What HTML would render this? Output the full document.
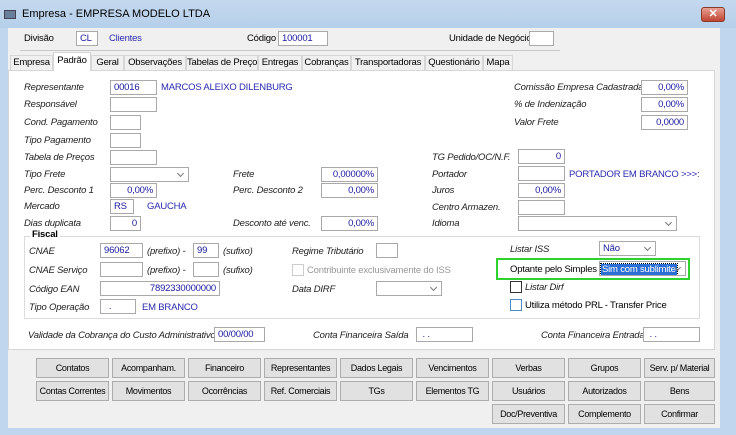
<!DOCTYPE html>
<html><head><meta charset="utf-8"><style>
*{box-sizing:border-box;margin:0;padding:0}
body{width:736px;height:435px;overflow:hidden;font-family:"Liberation Sans",sans-serif;font-size:9.5px;letter-spacing:-0.2px;color:#000;background:#bfd6ee;position:relative}
.a{position:absolute;white-space:nowrap}
.i{font-style:italic;color:#222}
.in{position:absolute;background:#fff;border:1px solid #a9a9a9;height:15px;font-size:9.5px;color:#1a1aa0;padding:0 3px;line-height:13px;white-space:nowrap;overflow:hidden}
.r{text-align:right}
.b{color:#2a2ab0}
.sel::after{content:"";position:absolute;right:5px;top:3px;width:4px;height:4px;border-right:1px solid #777;border-bottom:1px solid #777;transform:rotate(45deg)}
.tab{position:absolute;top:55px;height:15px;border:1px solid #d6d6d6;border-bottom:none;background:#f0f0f0;line-height:14px;text-align:center;font-size:9.5px;white-space:nowrap;overflow:hidden}
.btn{position:absolute;width:73px;height:20px;background:#e1e1e1;border:1px solid #adadad;text-align:center;line-height:18px;font-size:9px;white-space:nowrap;overflow:hidden;letter-spacing:-0.3px}
.cb{position:absolute;width:12px;height:12px;background:#fff;border:1px solid #333}
</style></head><body>
<div class="a" style="left:0;top:0;width:736px;height:28px;background:linear-gradient(#c4d9ef,#b6cfea)"></div>
<div class="a" style="left:4px;top:10px;width:12px;height:9px;background:#6a7f99;border:1px solid #445"></div>
<div class="a" style="left:22px;top:8px;font-size:11px;letter-spacing:0">Empresa - EMPRESA MODELO LTDA</div>
<div class="a" style="left:701px;top:7px;width:24px;height:15px;background:linear-gradient(#e8a195,#c0442f);border:1px solid #8a3a2c;border-radius:3px;color:#fff;font-weight:bold;text-align:center;line-height:13px;font-size:11px">✕</div>
<div class="a" style="left:8px;top:28px;width:712px;height:400px;background:#f0f0f0"></div>
<div class="a" style="left:24px;top:33px">Divisão</div>
<div class="in" style="left:76px;top:31px;width:22px">CL</div>
<div class="a b" style="left:109px;top:33px">Clientes</div>
<div class="a" style="left:247px;top:33px">Código</div>
<div class="in" style="left:278px;top:31px;width:50px">100001</div>
<div class="a" style="left:449px;top:33px">Unidade de Negócio</div>
<div class="in" style="left:529px;top:31px;width:25px"></div>
<div class="a" style="left:20px;top:50px;width:540px;height:1px;background:#c8c8c8"></div>
<div class="tab" style="left:10px;width:43px">Empresa</div>
<div class="tab" style="left:53px;top:52px;height:19px;width:38px;background:#fff;z-index:2;line-height:16px">Padrão</div>
<div class="tab" style="left:91px;width:33px">Geral</div>
<div class="tab" style="left:124px;width:62px">Observações</div>
<div class="tab" style="left:186px;width:72px">Tabelas de Preço</div>
<div class="tab" style="left:258px;width:44px">Entregas</div>
<div class="tab" style="left:302px;width:49px">Cobranças</div>
<div class="tab" style="left:351px;width:74px">Transportadoras</div>
<div class="tab" style="left:425px;width:58px">Questionário</div>
<div class="tab" style="left:483px;width:30px">Mapa</div>
<div class="a" style="left:8px;top:70px;width:707px;height:280px;background:#fff;border:1px solid #d6d6d6"></div>

<div class="a i" style="left:24px;top:82px">Representante</div>
<div class="in" style="left:110px;top:80px;width:47px">00016</div>
<div class="a b" style="left:161px;top:82px">MARCOS ALEIXO DILENBURG</div>
<div class="a i" style="left:24px;top:99px">Responsável</div>
<div class="in" style="left:110px;top:97px;width:47px"></div>
<div class="a i" style="left:24px;top:117px">Cond. Pagamento</div>
<div class="in" style="left:110px;top:115px;width:31px"></div>
<div class="a i" style="left:24px;top:135px">Tipo Pagamento</div>
<div class="in" style="left:110px;top:133px;width:31px"></div>
<div class="a i" style="left:24px;top:152px">Tabela de  Preços</div>
<div class="in" style="left:110px;top:150px;width:47px"></div>
<div class="a i" style="left:24px;top:169px">Tipo Frete</div>
<div class="in sel" style="left:110px;top:167px;width:79px"></div>
<div class="a i" style="left:24px;top:185px">Perc. Desconto 1</div>
<div class="in r" style="left:110px;top:183px;width:47px">0,00%</div>
<div class="a i" style="left:24px;top:201px">Mercado</div>
<div class="in" style="left:110px;top:199px;width:24px">RS</div>
<div class="a b" style="left:147px;top:201px">GAUCHA</div>
<div class="a i" style="left:24px;top:218px">Dias duplicata</div>
<div class="in r" style="left:110px;top:216px;width:31px">0</div>

<div class="a i" style="left:233px;top:169px">Frete</div>
<div class="in r" style="left:321px;top:167px;width:57px">0,00000%</div>
<div class="a i" style="left:233px;top:185px">Perc. Desconto 2</div>
<div class="in r" style="left:321px;top:183px;width:57px">0,00%</div>
<div class="a i" style="left:233px;top:218px">Desconto até venc.</div>
<div class="in r" style="left:321px;top:216px;width:57px">0,00%</div>

<div class="a i" style="left:514px;top:82px">Comissão Empresa Cadastrada</div>
<div class="in r" style="left:641px;top:80px;width:47px">0,00%</div>
<div class="a i" style="left:514px;top:99px">% de Indenização</div>
<div class="in r" style="left:641px;top:97px;width:47px">0,00%</div>
<div class="a i" style="left:514px;top:117px">Valor Frete</div>
<div class="in r" style="left:641px;top:115px;width:47px">0,0000</div>
<div class="a i" style="left:432px;top:152px">TG Pedido/OC/N.F.</div>
<div class="in r" style="left:518px;top:149px;width:47px">0</div>
<div class="a i" style="left:432px;top:169px">Portador</div>
<div class="in" style="left:518px;top:166px;width:47px"></div>
<div class="a b" style="left:569px;top:169px">PORTADOR EM BRANCO &gt;&gt;&gt;:</div>
<div class="a i" style="left:432px;top:185px">Juros</div>
<div class="in r" style="left:518px;top:183px;width:47px">0,00%</div>
<div class="a i" style="left:432px;top:202px">Centro Armazen.</div>
<div class="in" style="left:518px;top:200px;width:47px"></div>
<div class="a i" style="left:432px;top:218px">Idioma</div>
<div class="in sel" style="left:518px;top:216px;width:159px"></div>

<div class="a" style="left:24px;top:236px;width:676px;height:83px;border:1px solid #dcdcdc"></div>
<div class="a" style="left:30px;top:229px;background:#fff;padding:0 2px;font-weight:bold">Fiscal</div>
<div class="a i" style="left:29px;top:246px">CNAE</div>
<div class="in" style="left:100px;top:243px;width:43px">96062</div>
<div class="a i" style="left:147px;top:246px">(prefixo) -</div>
<div class="in" style="left:193px;top:243px;width:26px">99</div>
<div class="a i" style="left:223px;top:246px">(sufixo)</div>
<div class="a i" style="left:29px;top:265px">CNAE Serviço</div>
<div class="in" style="left:100px;top:262px;width:43px"></div>
<div class="a i" style="left:147px;top:265px">(prefixo) -</div>
<div class="in" style="left:193px;top:262px;width:26px"></div>
<div class="a i" style="left:223px;top:265px">(sufixo)</div>
<div class="a i" style="left:29px;top:284px">Código EAN</div>
<div class="in r" style="left:100px;top:281px;width:120px">7892330000000</div>
<div class="a i" style="left:29px;top:302px">Tipo Operação</div>
<div class="in" style="left:100px;top:299px;width:36px">&nbsp;&nbsp;.</div>
<div class="a b" style="left:142px;top:302px">EM BRANCO</div>
<div class="a i" style="left:292px;top:246px">Regime Tributário</div>
<div class="in" style="left:376px;top:243px;width:22px"></div>
<div class="cb" style="left:292px;top:264px;border-color:#ccc"></div>
<div class="a" style="left:307px;top:265px;color:#999">Contribuinte exclusivamente do ISS</div>
<div class="a i" style="left:292px;top:284px">Data DIRF</div>
<div class="in sel" style="left:376px;top:281px;width:66px"></div>
<div class="a i" style="left:510px;top:244px">Listar  ISS</div>
<div class="in sel" style="left:599px;top:241px;width:57px">Não</div>
<div class="a" style="left:496px;top:258px;width:194px;height:22px;border:2px solid #2ed12e"></div>
<div class="a" style="left:510px;top:264px">Optante pelo Simples</div>
<div class="in sel" style="left:599px;top:261px;width:87px;padding:1px"><span style="background:#2b6fd6;color:#fff;padding:0 1px;display:inline-block;line-height:11px;outline:1px dotted #000">Sim com sublimite</span></div>
<div class="cb" style="left:510px;top:281px"></div>
<div class="a i" style="left:525px;top:282px">Listar Dirf</div>
<div class="cb" style="left:510px;top:299px;border-color:#4a8cc8"></div>
<div class="a" style="left:525px;top:300px">Utiliza método PRL - Transfer Price</div>

<div class="a i" style="left:28px;top:330px">Validade da Cobrança do Custo Administrativo</div>
<div class="in" style="left:214px;top:327px;width:51px">00/00/00</div>
<div class="a i" style="left:313px;top:330px">Conta Financeira Saída</div>
<div class="in" style="left:416px;top:327px;width:57px">&nbsp;. .</div>
<div class="a i" style="left:541px;top:330px">Conta Financeira Entrada</div>
<div class="in" style="left:643px;top:327px;width:57px">&nbsp;. .</div>

<div class="btn" style="left:36px;top:358px">Contatos</div>
<div class="btn" style="left:112px;top:358px">Acompanham.</div>
<div class="btn" style="left:188px;top:358px">Financeiro</div>
<div class="btn" style="left:264px;top:358px">Representantes</div>
<div class="btn" style="left:340px;top:358px">Dados Legais</div>
<div class="btn" style="left:416px;top:358px">Vencimentos</div>
<div class="btn" style="left:492px;top:358px">Verbas</div>
<div class="btn" style="left:568px;top:358px">Grupos</div>
<div class="btn" style="left:644px;top:358px;width:71px">Serv. p/ Material</div>
<div class="btn" style="left:36px;top:381px">Contas Correntes</div>
<div class="btn" style="left:112px;top:381px">Movimentos</div>
<div class="btn" style="left:188px;top:381px">Ocorrências</div>
<div class="btn" style="left:264px;top:381px">Ref. Comerciais</div>
<div class="btn" style="left:340px;top:381px">TGs</div>
<div class="btn" style="left:416px;top:381px">Elementos TG</div>
<div class="btn" style="left:492px;top:381px">Usuários</div>
<div class="btn" style="left:568px;top:381px">Autorizados</div>
<div class="btn" style="left:644px;top:381px;width:71px">Bens</div>
<div class="btn" style="left:492px;top:404px">Doc/Preventiva</div>
<div class="btn" style="left:568px;top:404px">Complemento</div>
<div class="btn" style="left:644px;top:404px;width:71px">Confirmar</div>
</body></html>
